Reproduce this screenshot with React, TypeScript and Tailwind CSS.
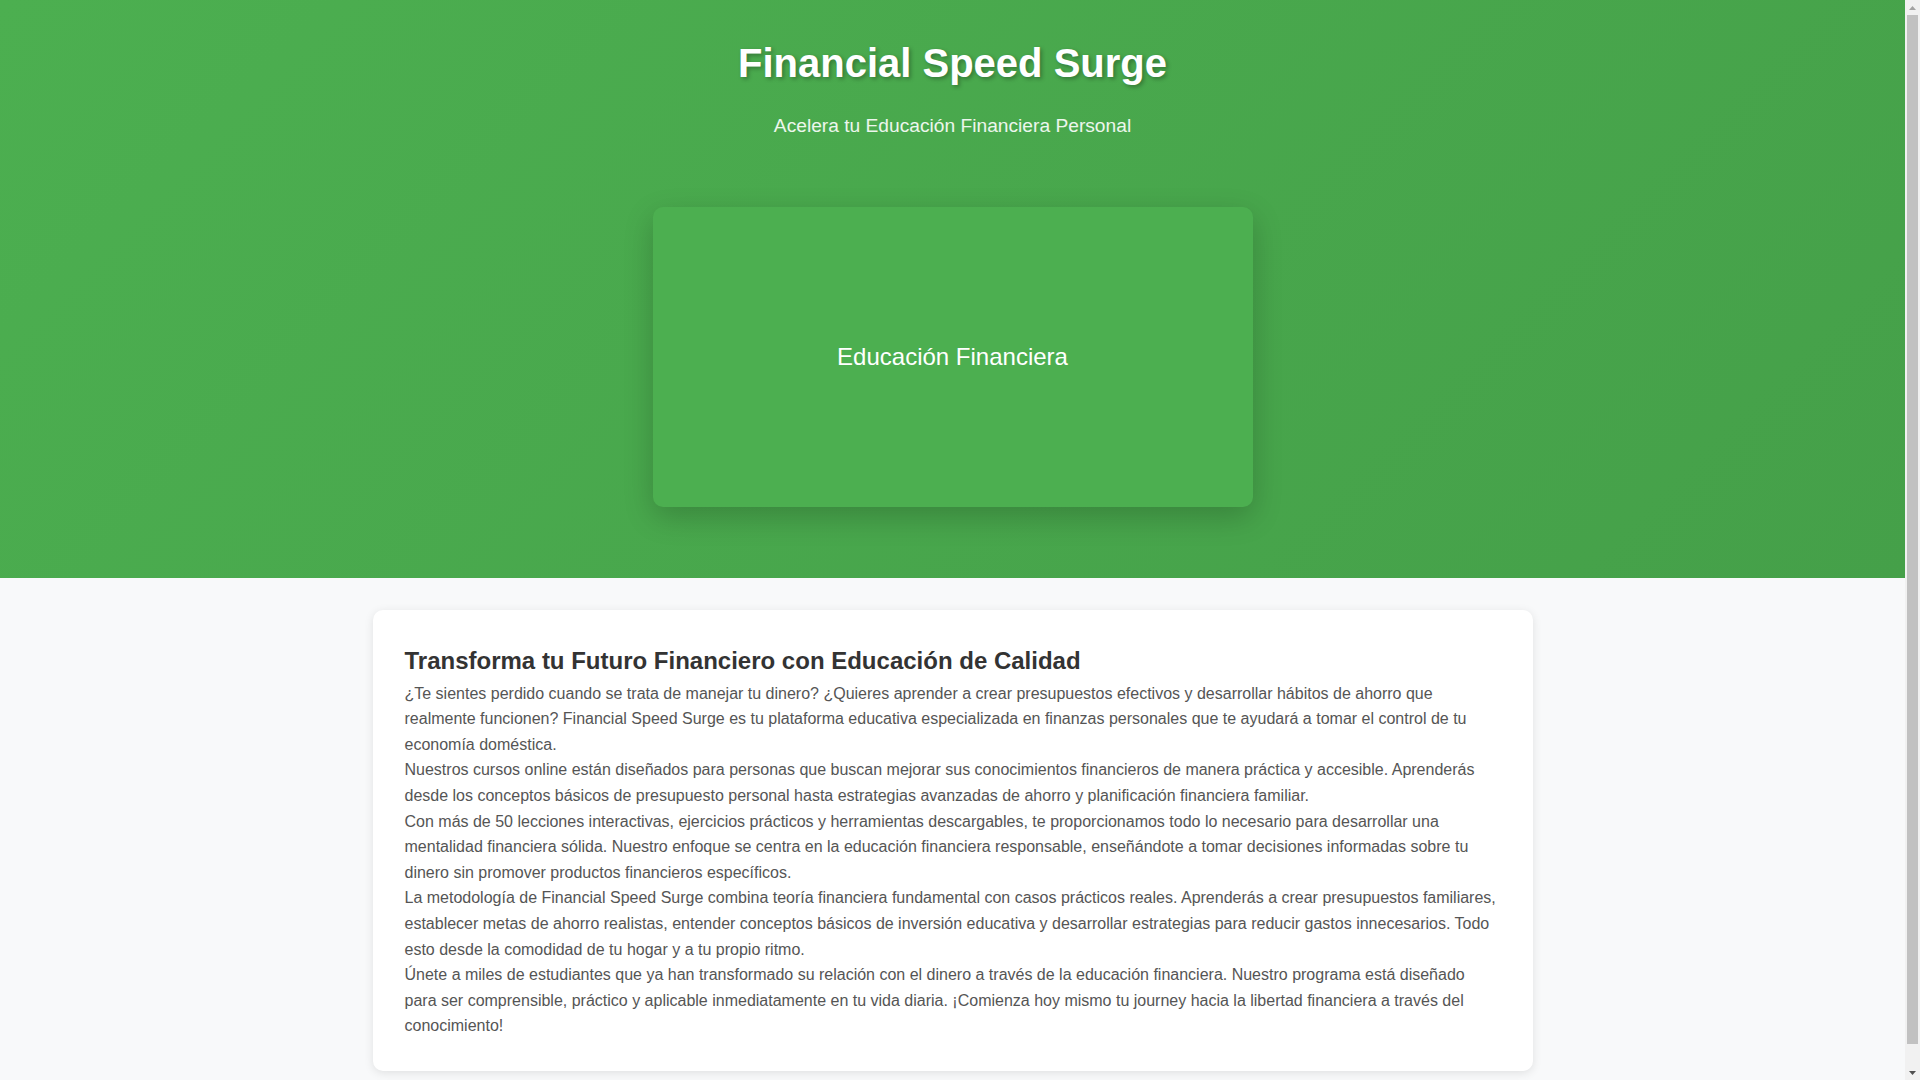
const paragraphs = [
  "¿Te sientes perdido cuando se trata de manejar tu dinero? ¿Quieres aprender a crear presupuestos efectivos y desarrollar hábitos de ahorro que realmente funcionen? Financial Speed Surge es tu plataforma educativa especializada en finanzas personales que te ayudará a tomar el control de tu economía doméstica.",
  "Nuestros cursos online están diseñados para personas que buscan mejorar sus conocimientos financieros de manera práctica y accesible. Aprenderás desde los conceptos básicos de presupuesto personal hasta estrategias avanzadas de ahorro y planificación financiera familiar.",
  "Con más de 50 lecciones interactivas, ejercicios prácticos y herramientas descargables, te proporcionamos todo lo necesario para desarrollar una mentalidad financiera sólida. Nuestro enfoque se centra en la educación financiera responsable, enseñándote a tomar decisiones informadas sobre tu dinero sin promover productos financieros específicos.",
  "La metodología de Financial Speed Surge combina teoría financiera fundamental con casos prácticos reales. Aprenderás a crear presupuestos familiares, establecer metas de ahorro realistas, entender conceptos básicos de inversión educativa y desarrollar estrategias para reducir gastos innecesarios. Todo esto desde la comodidad de tu hogar y a tu propio ritmo.",
  "Únete a miles de estudiantes que ya han transformado su relación con el dinero a través de la educación financiera. Nuestro programa está diseñado para ser comprensible, práctico y aplicable inmediatamente en tu vida diaria. ¡Comienza hoy mismo tu journey hacia la libertad financiera a través del conocimiento!",
];

// the browser's classic scrollbar strip, as seen in the screenshot
function ScrollGutter() {
  return (
    <aside className="sticky top-0 flex h-screen w-[15px] shrink-0 flex-col bg-[#f1f1f1]">
      <div className="flex h-[15px] items-center justify-center">
        <svg width="7" height="4" viewBox="0 0 7 4">
          <path d="M0 4 L3.5 0 L7 4 Z" fill="#a3a3a3" />
        </svg>
      </div>
      <div className="mx-[2px] h-[1029px] bg-[#c1c1c1]" />
      <div className="flex-1" />
      <div className="flex h-[15px] items-center justify-center">
        <svg width="7" height="4" viewBox="0 0 7 4">
          <path d="M0 0 L3.5 4 L7 0 Z" fill="#505050" />
        </svg>
      </div>
    </aside>
  );
}

export default function App() {
  return (
    <div className="flex min-h-screen bg-[#f8f9fa] font-['Liberation_Sans',Arial,sans-serif] text-[16px] leading-[1.6] text-[#333]">
      <div className="min-w-0 flex-1">
        <header className="bg-[linear-gradient(135deg,#4CAF50,#45a049)] pt-[31px] pb-[71px] text-center text-white">
          <h1 className="text-[40px] font-bold leading-[64px] [text-shadow:2px_2px_4px_rgba(0,0,0,0.3)]">
            Financial Speed Surge
          </h1>
          <p className="mt-[15.5px] text-[19.2px] leading-[1.6] text-white/90">
            Acelera tu Educación Financiera Personal
          </p>
          <div className="mx-auto mt-[66px] flex h-[300px] w-[600px] items-center justify-center rounded-[10px] bg-[#4CAF50] shadow-[0_10px_30px_rgba(0,0,0,0.2)]">
            <span className="text-[24px]">Educación Financiera</span>
          </div>
        </header>

        <main className="mx-auto max-w-[1200px] px-5 pt-8 pb-8">
          <section className="rounded-[10px] bg-white p-8 shadow-[0_2px_10px_rgba(0,0,0,0.1)]">
            <h2 className="text-[24px] font-bold text-[#333]">
              Transforma tu Futuro Financiero con Educación de Calidad
            </h2>
            {paragraphs.map((p, i) => (
              <p key={i} className="text-[#555]">
                {p}
              </p>
            ))}
          </section>
        </main>
      </div>
      <ScrollGutter />
    </div>
  );
}
